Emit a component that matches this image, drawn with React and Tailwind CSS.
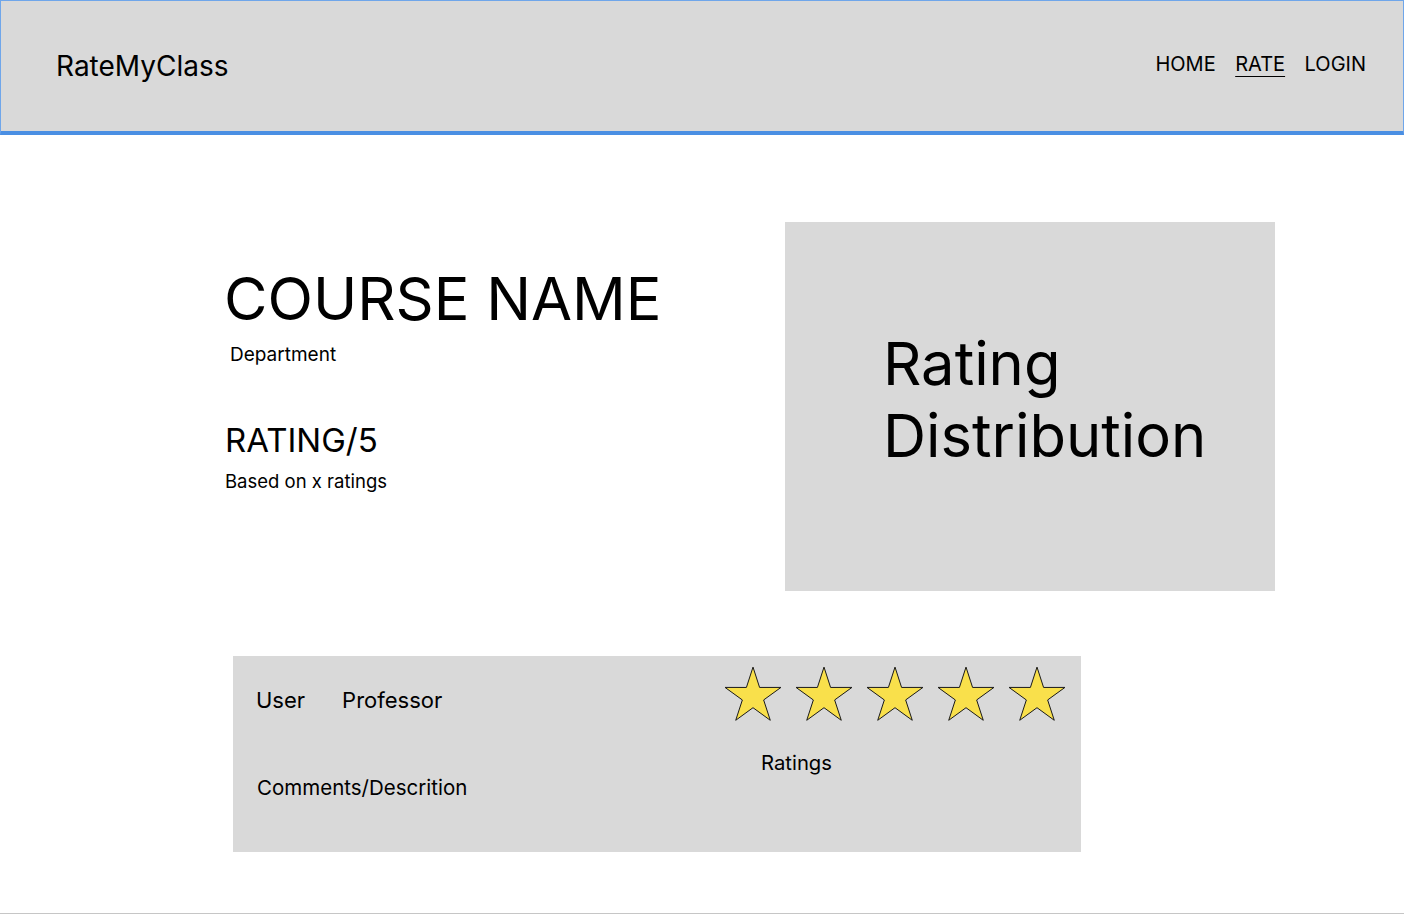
import React from "react";

function Star() {
  const cx = 29, cy = 30.5, R = 29.4, r = 11.2;
  const pts = [];
  for (let i = 0; i < 10; i++) {
    const rad = i % 2 === 0 ? R : r;
    const a = -Math.PI / 2 + (i * Math.PI) / 5;
    pts.push(`${(cx + rad * Math.cos(a)).toFixed(2)},${(cy + rad * Math.sin(a)).toFixed(2)}`);
  }
  return (
    <svg width="58" height="56" viewBox="0 0 58 56" className="block">
      <polygon points={pts.join(" ")} fill="#f9e04b" stroke="#1a1a1a" strokeWidth="1" strokeLinejoin="miter" />
    </svg>
  );
}

export default function App() {
  return (
    <div className="w-[1404px] h-[914px] bg-white border-b border-[#c6c6c6] font-['Inter','Liberation_Sans',sans-serif] text-black overflow-hidden">
      <header className="h-[135px] bg-[#d9d9d9] border-t border-x border-[#6fa6ea] border-b-4 border-b-[#4a8fe3] flex items-start justify-between pl-[55px] pr-[37px]">
        <div className="pt-[48px] text-[28px] leading-[34px]">RateMyClass</div>
        <nav className="pt-[51px] flex gap-[19.5px] text-[20px] leading-[24px]">
          <span>HOME</span>
          <span className="underline decoration-1 underline-offset-[5px]">RATE</span>
          <span>LOGIN</span>
        </nav>
      </header>

      <main className="pt-[87px]">
        <section className="flex">
          <div className="w-[785px] shrink-0 pl-[225px] pt-[46px] flex flex-col items-start">
            <h1 className="-ml-[1px] text-[59.5px] leading-[60px] font-normal whitespace-nowrap">COURSE NAME</h1>
            <div className="mt-[15px] ml-[5px] text-[19px] leading-[24px]">Department</div>
            <div className="mt-[54px] text-[33px] leading-[38px]">RATING/5</div>
            <div className="mt-[10px] text-[18.5px] leading-[24px]">Based on x ratings</div>
          </div>
          <div className="w-[490px] h-[369px] shrink-0 bg-[#d9d9d9] pl-[98px] pt-[105px]">
            <div className="text-[59.7px] leading-[72px] whitespace-nowrap">
              Rating
              <br />
              Distribution
            </div>
          </div>
        </section>

        <section className="mt-[65px] ml-[233px] w-[848px] h-[196px] bg-[#d9d9d9] flex">
          <div className="w-[491px] shrink-0 pl-[23px] pt-[31px] flex flex-col">
            <div className="flex gap-[37px] text-[22px] leading-[26px]">
              <span>User</span>
              <span>Professor</span>
            </div>
            <div className="mt-[63px] ml-[1px] text-[20.5px] leading-[24px]">Comments/Descrition</div>
          </div>
          <div className="pt-[10px] flex flex-col items-start">
            <div className="flex gap-[13px]">
              <Star />
              <Star />
              <Star />
              <Star />
              <Star />
            </div>
            <div className="mt-[29px] ml-[37px] text-[20.3px] leading-[24px]">Ratings</div>
          </div>
        </section>
      </main>
    </div>
  );
}
